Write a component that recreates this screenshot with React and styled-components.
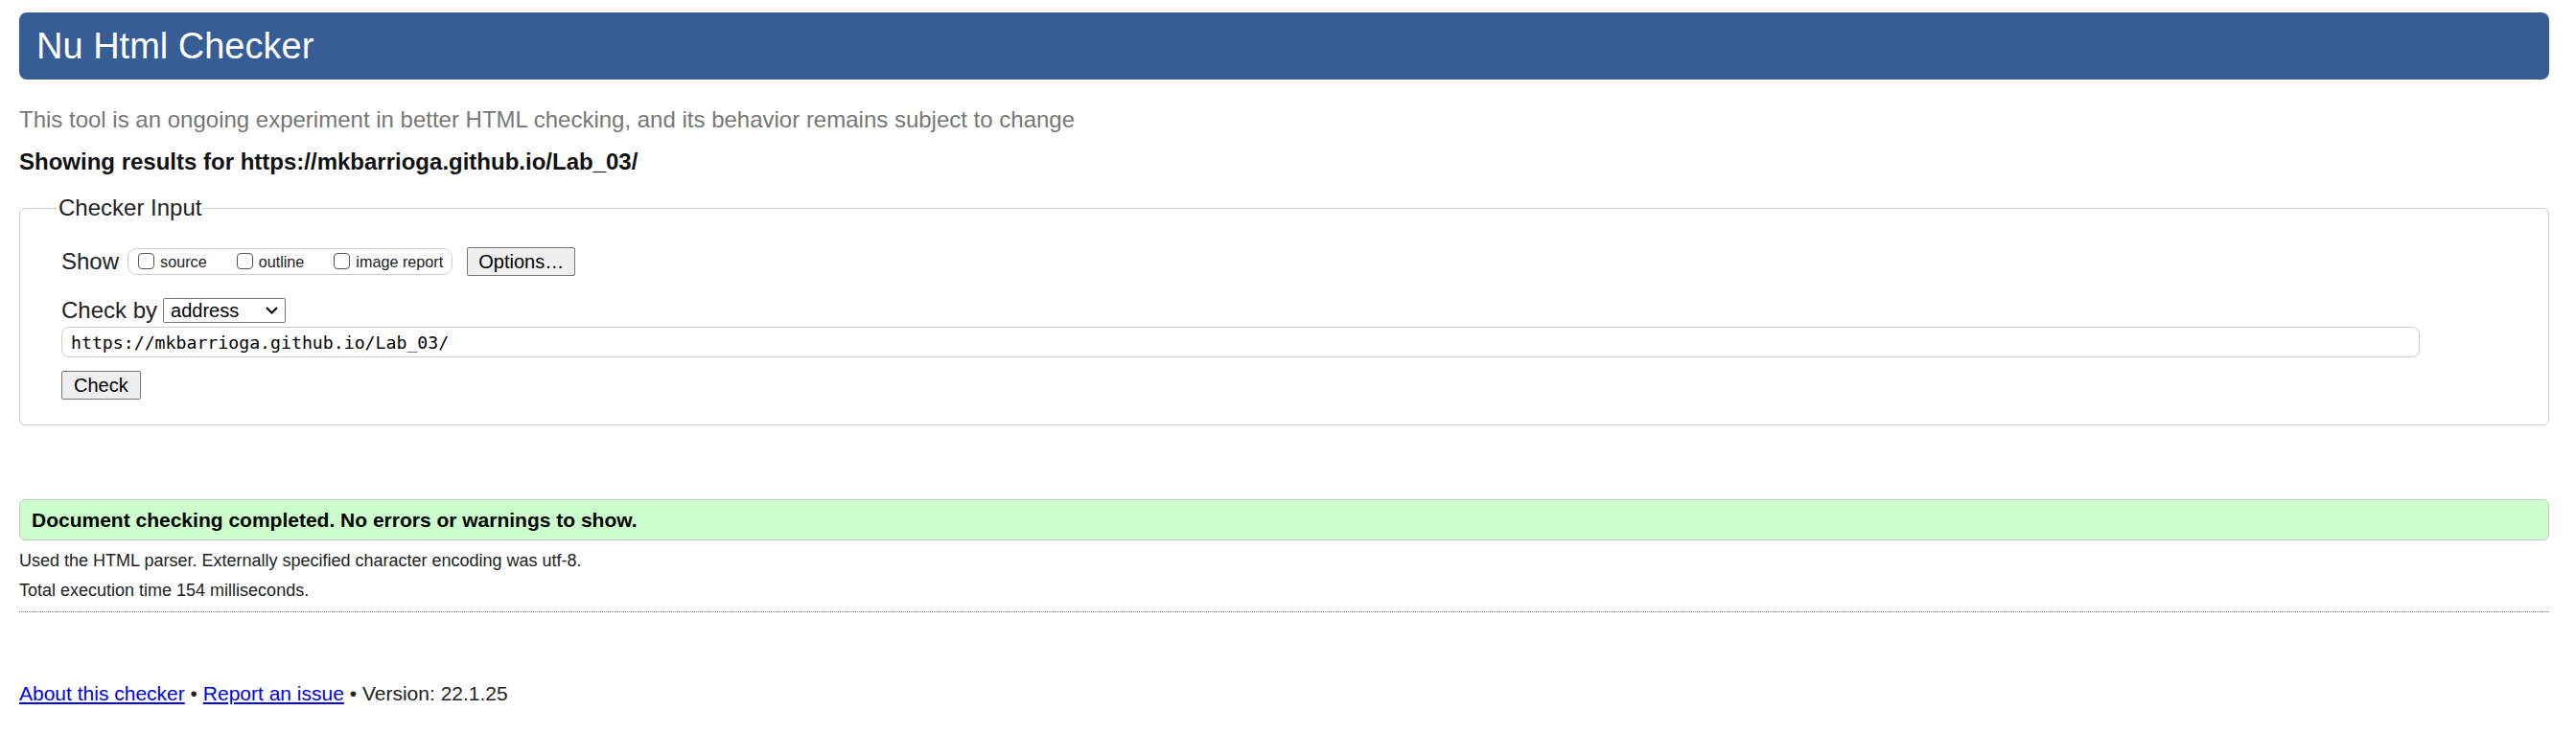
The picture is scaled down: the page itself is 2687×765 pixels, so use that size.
import React from 'react'
import styled, { createGlobalStyle } from 'styled-components'

const GlobalStyle = createGlobalStyle`
  html, body {
    margin: 0;
    padding: 0;
    background: #fff;
  }
  body {
    font-family: "Liberation Sans", Arial, sans-serif;
    color: #222;
  }
`

const Page = styled.div`
  padding: 13px 28px 20px 20px;
`

const Banner = styled.header`
  display: flex;
  align-items: center;
  height: 70px;
  padding-left: 18px;
  background: #365d95;
  border-radius: 8px;
`

const Title = styled.h1`
  margin: 0;
  font-size: 38px;
  font-weight: normal;
  line-height: 44px;
  color: #fff;
`

const Intro = styled.p`
  margin: 28px 0 0 0;
  font-size: 24px;
  line-height: 28px;
  color: #777;
`

const ResultsFor = styled.p`
  margin: 16px 0 0 0;
  font-size: 24px;
  font-weight: bold;
  line-height: 28px;
  color: #111;
`

const InputSet = styled.fieldset`
  margin: 20px 0 0 0;
  padding: 27px 134px 26px 43px;
  border: 1px solid #ccc;
  border-radius: 6px;
  min-width: 0;
`

const Legend = styled.legend`
  margin-left: -5px;
  padding: 0 1px 0 2px;
  font-size: 24px;
  line-height: 28px;
  color: #222;
`

const Row = styled.div`
  display: flex;
  align-items: center;
  margin-top: ${p => p.$top || 0}px;
`

const Label = styled.span`
  font-size: 24px;
  line-height: 28px;
  color: #222;
  margin-right: ${p => p.$gap || 0}px;
`

const ShowGroup = styled.span`
  display: flex;
  align-items: center;
  height: 26px;
  padding: 0 9px 0 10px;
  border: 1px solid #ccc;
  border-radius: 10px;
  margin-right: 15px;
`

const Option = styled.label`
  display: flex;
  align-items: flex-end;
  gap: 6px;
  margin-right: ${p => (p.$last ? 0 : 31)}px;
  font-size: 16.2px;
  line-height: 18px;
  color: #222;
`

const Box = styled.input`
  appearance: none;
  width: 17px;
  height: 17px;
  margin: 0 0 1px 0;
  border: 1.5px solid #555;
  border-radius: 4px;
  background: #fff;
  box-sizing: border-box;
`

const Button = styled.button`
  height: 30px;
  padding: 0 ${p => p.$pad || 12}px;
  font-family: "Liberation Sans", Arial, sans-serif;
  font-size: 20px;
  color: #000;
  background: #efefef;
  border: 1px solid #767676;
  border-radius: 2px;
`

const SelectWrap = styled.span`
  position: relative;
  display: inline-flex;
`

const Select = styled.select`
  appearance: none;
  width: 128px;
  height: 26px;
  padding: 0 0 0 7px;
  font-family: "Liberation Sans", Arial, sans-serif;
  font-size: 20px;
  color: #000;
  background: #fff;
  border: 1px solid #767676;
  border-radius: 2px;
`

const Chevron = styled.svg`
  position: absolute;
  right: 8px;
  top: 9px;
  pointer-events: none;
`

const UrlField = styled.input`
  display: block;
  width: 100%;
  height: 32px;
  margin-top: 3px;
  padding: 0 9px;
  box-sizing: border-box;
  font-family: "DejaVu Sans Mono", "Liberation Mono", monospace;
  font-size: 18.2px;
  color: #000;
  border: 1px solid #ccc;
  border-radius: 8px;
`

const CheckRow = styled.div`
  margin-top: 14px;
`

const Success = styled.div`
  margin-top: 77px;
  padding: 8px 12px;
  background: #ccffcc;
  border: 1px solid #c6c6c6;
  border-radius: 6px;
  font-size: 21px;
  font-weight: bold;
  line-height: 25px;
  color: #000;
`

const Detail = styled.p`
  margin: ${p => p.$top}px 0 0 0;
  font-size: 18px;
  line-height: 20px;
  color: #222;
`

const Rule = styled.hr`
  margin: 12px 0 0 0;
  border: 0;
  border-top: 1px dotted #777;
`

const Footer = styled.p`
  margin: 73px 0 0 0;
  font-size: 21px;
  line-height: 24px;
  color: #222;
`

const Link = styled.a`
  color: #0000ee;
  text-decoration: underline;
`

export default function App() {
  return (
    <>
      <GlobalStyle />
      <Page>
        <Banner>
          <Title>Nu Html Checker</Title>
        </Banner>
        <Intro>This tool is an ongoing experiment in better HTML checking, and its behavior remains subject to change</Intro>
        <ResultsFor>Showing results for https://mkbarrioga.github.io/Lab_03/</ResultsFor>

        <InputSet>
          <Legend>Checker Input</Legend>
          <Row>
            <Label $gap={9}>Show</Label>
            <ShowGroup>
              <Option><Box type="checkbox" />source</Option>
              <Option><Box type="checkbox" />outline</Option>
              <Option $last><Box type="checkbox" />image report</Option>
            </ShowGroup>
            <Button type="button" $pad={11}>Options…</Button>
          </Row>
          <Row $top={22}>
            <Label $gap={6}>Check by</Label>
            <SelectWrap>
              <Select defaultValue="address">
                <option value="address">address</option>
                <option value="file">file upload</option>
                <option value="text">text input</option>
              </Select>
              <Chevron width="13" height="8" viewBox="0 0 13 8">
                <path d="M1 1l5.5 5.5L12 1" fill="none" stroke="#000" strokeWidth="2" />
              </Chevron>
            </SelectWrap>
          </Row>
          <UrlField type="url" defaultValue="https://mkbarrioga.github.io/Lab_03/" />
          <CheckRow>
            <Button type="submit" $pad={12}>Check</Button>
          </CheckRow>
        </InputSet>

        <Success>Document checking completed. No errors or warnings to show.</Success>
        <Detail $top={11}>Used the HTML parser. Externally specified character encoding was utf-8.</Detail>
        <Detail $top={11}>Total execution time 154 milliseconds.</Detail>
        <Rule />
        <Footer>
          <Link href="#about">About this checker</Link> • <Link href="#issue">Report an issue</Link> • Version: 22.1.25
        </Footer>
      </Page>
    </>
  )
}
